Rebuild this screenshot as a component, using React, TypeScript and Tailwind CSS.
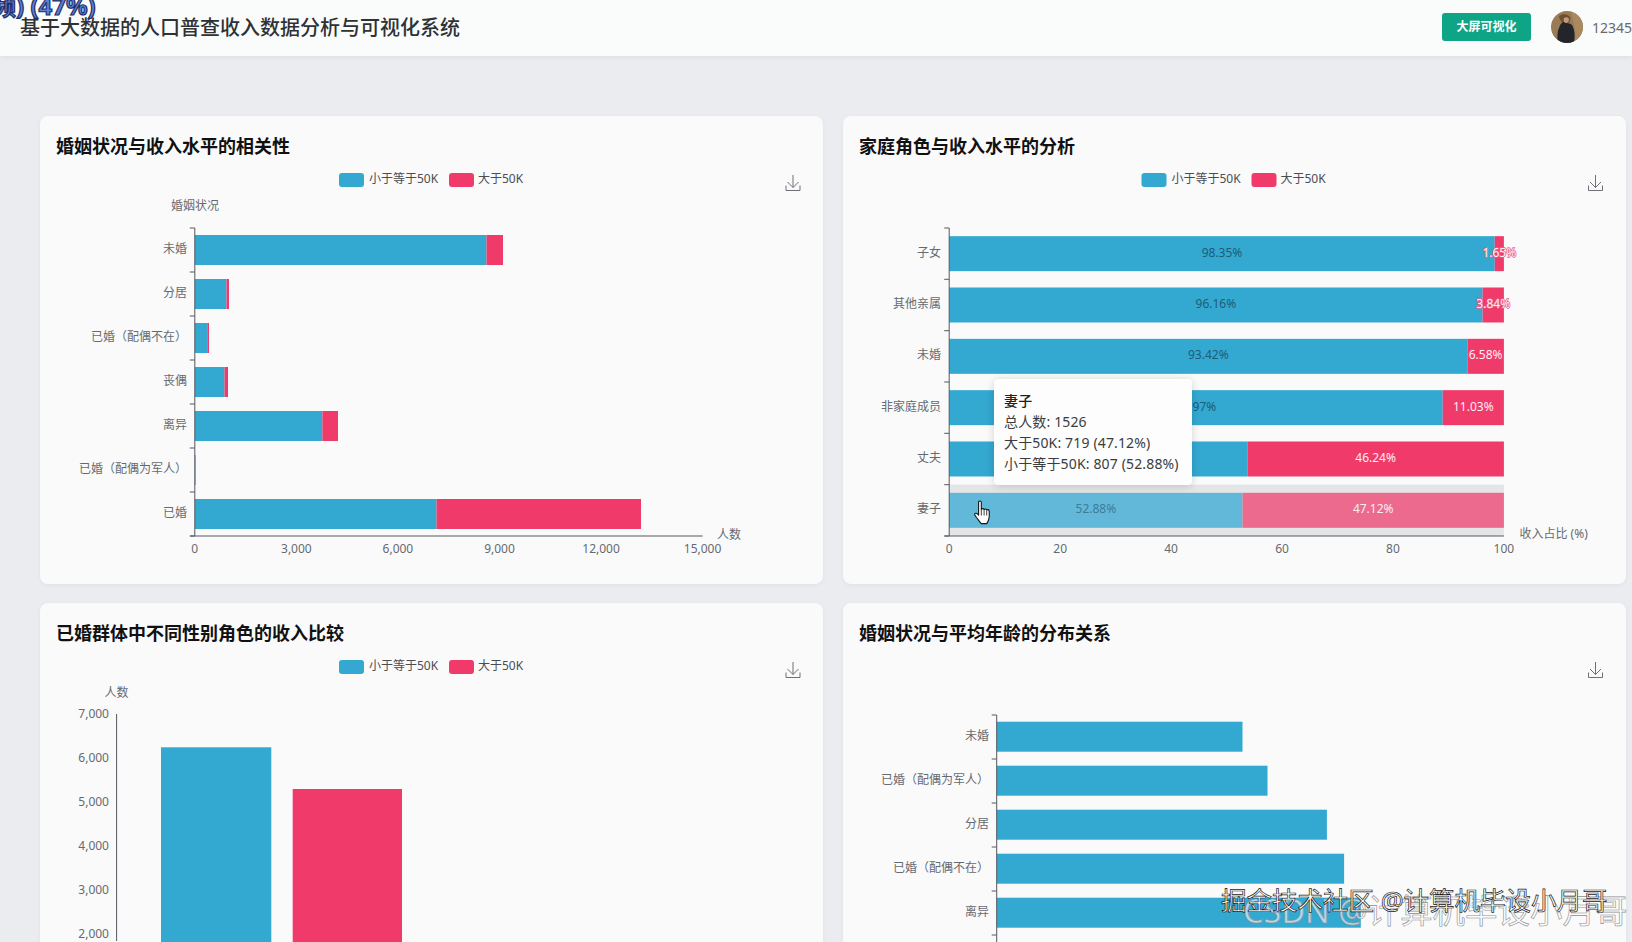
import type { ReactNode } from "react"

const BLUE = "#33a8d0"
const RED = "#f03a6a"
const AXIS = "#55585f"
const LABEL = "#666a70"

const LEFT_X = 40
const RIGHT_X = 843.5
const CARD_W = 783
const TOP_Y = 166
const BOTTOM_Y = 654
const CHART_H = 418

// numbers below are page pixels, the viewBox maps them onto each card
function Legend({ shift, y }: { shift: number; y: number }) {
  return (
    <g fontSize={12} fill="#4a4d52">
      <rect x={339 + shift} y={y} width={25} height={14} rx={3} fill={BLUE} />
      <text x={369 + shift} y={y + 10}>小于等于50K</text>
      <rect x={449 + shift} y={y} width={25} height={14} rx={3} fill={RED} />
      <text x={478 + shift} y={y + 10}>大于50K</text>
    </g>
  )
}

function SaveIcon({ shift, y }: { shift: number; y: number }) {
  const x = 786 + shift
  return (
    <path
      d={`M${x + 7} ${y}V${y + 12.5}M${x + 1.5} ${y + 7}L${x + 7} ${y + 12.5}L${x + 12.5} ${y + 7}M${x} ${y + 10.5}V${y + 15.5}H${x + 14}V${y + 10.5}`}
      fill="none"
      stroke="#6e7079"
      strokeWidth={1}
    />
  )
}

function Chart({ x, y, children }: { x: number; y: number; children: ReactNode }) {
  return (
    <svg viewBox={`${x} ${y} ${CARD_W} ${CHART_H}`} width={CARD_W} height={CHART_H} className="block">
      {children}
    </svg>
  )
}

function Card({ title, children, extra }: { title: string; children: ReactNode; extra?: ReactNode }) {
  return (
    <section className="relative h-[468px] rounded-lg bg-[#fafafa] shadow-[0_1px_4px_rgba(0,0,0,0.05)]">
      <h3 className="h-[50px] pl-4 pt-[18px] text-[18px] leading-[25px] font-bold text-[#111111]">{title}</h3>
      {children}
      {extra}
    </section>
  )
}

function YTicks({ x, ys }: { x: number; ys: number[] }) {
  return (
    <>
      <path d={`M${x} ${ys[0]}V${ys[ys.length - 1]}`} stroke={AXIS} strokeWidth={1} />
      {ys.map((y) => (
        <path key={y} d={`M${x - 5} ${y}H${x}`} stroke={AXIS} strokeWidth={1} />
      ))}
    </>
  )
}

const maritalCounts = [
  { name: "未婚", y: 250, blue: 486.5, red: 503 },
  { name: "分居", y: 294, blue: 226.5, red: 229 },
  { name: "已婚（配偶不在）", y: 338, blue: 207.3, red: 209 },
  { name: "丧偶", y: 382, blue: 224.5, red: 228 },
  { name: "离异", y: 426, blue: 322.4, red: 338 },
  { name: "已婚（配偶为军人）", y: 470, blue: 195.2, red: 195.6 },
  { name: "已婚", y: 514, blue: 436.5, red: 641 },
]

function MaritalChart() {
  const x0 = 194.8
  return (
    <Chart x={LEFT_X} y={TOP_Y}>
      <Legend shift={0} y={173} />
      <SaveIcon shift={0} y={175} />
      <text x={195} y={210} fontSize={12} fill={LABEL} textAnchor="middle">婚姻状况</text>
      {maritalCounts.map((row) => (
        <g key={row.name}>
          <rect x={x0} y={row.y - 15} width={row.blue - x0} height={30} fill={BLUE} />
          <rect x={row.blue} y={row.y - 15} width={row.red - row.blue} height={30} fill={RED} />
          <text x={187} y={row.y + 3} fontSize={12} fill={LABEL} textAnchor="end">{row.name}</text>
        </g>
      ))}
      <YTicks x={x0} ys={[228, 272, 316, 360, 404, 448, 492, 536]} />
      <path d={`M190 536H702.6`} stroke={AXIS} strokeWidth={1} />
      {["0", "3,000", "6,000", "9,000", "12,000", "15,000"].map((t, i) => (
        <text key={t} x={x0 + i * 101.56} y={553} fontSize={12} fill={LABEL} textAnchor="middle">{t}</text>
      ))}
      <text x={717} y={539} fontSize={12} fill={LABEL}>人数</text>
    </Chart>
  )
}

const roleShares = [
  { name: "子女", blue: 98.35, red: 1.65 },
  { name: "其他亲属", blue: 96.16, red: 3.84 },
  { name: "未婚", blue: 93.42, red: 6.58 },
  { name: "非家庭成员", blue: 88.97, red: 11.03 },
  { name: "丈夫", blue: 53.76, red: 46.24 },
  { name: "妻子", blue: 52.88, red: 47.12 },
]

function RoleChart() {
  const x0 = 949.7
  const w = 554.7
  const step = 51.33
  return (
    <Chart x={RIGHT_X} y={TOP_Y}>
      <Legend shift={803} y={173} />
      <SaveIcon shift={803} y={175} />
      <rect x={x0} y={484.6} width={w} height={51.4} fill="#e4e5e6" />
      {roleShares.map((row, i) => {
        const cy = 228 + step * i + step / 2
        const hovered = i === 5
        const split = x0 + (row.blue / 100) * w
        const thin = row.red < 5
        return (
          <g key={row.name} fontSize={12}>
            <rect x={x0} y={cy - 17.5} width={split - x0} height={35} fill={hovered ? "#62b8d8" : BLUE} />
            <rect x={split} y={cy - 17.5} width={x0 + w - split} height={35} fill={hovered ? "#ec6a8d" : RED} />
            <text x={(x0 + split) / 2} y={cy + 3} fill={hovered ? "#3f7c98" : "#1f5c78"} textAnchor="middle">
              {row.blue.toFixed(2)}%
            </text>
            <text
              x={(split + x0 + w) / 2}
              y={cy + 3}
              fill="#fdeef2"
              textAnchor="middle"
              stroke={thin ? "#ee5f86" : "none"}
              strokeWidth={thin ? 1.5 : 0}
              paintOrder="stroke"
            >
              {row.red.toFixed(2)}%
            </text>
            <text x={941.5} y={cy + 3} fill={LABEL} textAnchor="end">{row.name}</text>
          </g>
        )
      })}
      <YTicks x={x0} ys={[228, 279.3, 330.7, 382, 433.3, 484.7, 536]} />
      <path d={`M945 536H${x0 + w}`} stroke={AXIS} strokeWidth={1} />
      {[0, 20, 40, 60, 80, 100].map((t) => (
        <text key={t} x={x0 + (t / 100) * w} y={553} fontSize={12} fill={LABEL} textAnchor="middle">{t}</text>
      ))}
      <text x={1520} y={538} fontSize={12} fill={LABEL}>收入占比 (%)</text>
    </Chart>
  )
}

function RoleTooltip() {
  return (
    <div className="absolute left-[151px] top-[263px] h-[106px] w-[198px] rounded bg-[#fdfdfd] px-[10px] py-[11px] text-[14px] leading-[21px] tracking-[0.15px] text-[#3a3c40] shadow-[0_1px_8px_rgba(0,0,0,0.16)]">
      <p className="font-medium text-[#222222]">妻子</p>
      <p>总人数: 1526</p>
      <p>大于50K: 719 (47.12%)</p>
      <p className="whitespace-nowrap">小于等于50K: 807 (52.88%)</p>
    </div>
  )
}

function HandCursor() {
  return (
    <svg viewBox="0 0 18 25" className="absolute left-[131px] top-[384px] h-[25px] w-[18px]">
      <path
        d="M4.6 2.2c0-1.6 2.7-1.6 2.7 0v7.4c.4-1.4 2.7-1.3 2.8.2.4-1.2 2.5-1 2.6.4.5-1 2.3-.7 2.4.7.3 3 .3 6-.3 8.2-.5 2.1-1.3 3.5-2.1 4.5H7.3C5.8 22 4.2 19.6 2.5 17.5 1.5 16.2.4 14.9.7 13.9c.4-1 1.9-.9 2.8 0l1.1 1.2Z"
        fill="#ffffff"
        stroke="#151515"
        strokeWidth={1.1}
        strokeLinejoin="round"
      />
      <path d="M7.3 10v5.5M10.1 10.2v5.3M12.7 11v4.5" stroke="#151515" strokeWidth={0.8} fill="none" />
    </svg>
  )
}

function GenderChart() {
  const axisX = 116.6
  return (
    <Chart x={LEFT_X} y={BOTTOM_Y}>
      <Legend shift={0} y={661} />
      <SaveIcon shift={0} y={663} />
      <text x={116.5} y={698} fontSize={12} fill={LABEL} textAnchor="middle">人数</text>
      <path d={`M${axisX} 715V942`} stroke={AXIS} strokeWidth={1} />
      {["7,000", "6,000", "5,000", "4,000", "3,000", "2,000"].map((t, i) => (
        <text key={t} x={109} y={719 + i * 44} fontSize={12} fill={LABEL} textAnchor="end">{t}</text>
      ))}
      <rect x={161} y={748.3} width={110.3} height={200} fill={BLUE} />
      <rect x={292.7} y={790} width={109.3} height={160} fill={RED} />
    </Chart>
  )
}

const ageBars = [
  { name: "未婚", end: 1243 },
  { name: "已婚（配偶为军人）", end: 1268 },
  { name: "分居", end: 1327.4 },
  { name: "已婚（配偶不在）", end: 1344.6 },
  { name: "离异", end: 1361.3 },
]

function AgeChart() {
  const x0 = 997.2
  return (
    <Chart x={RIGHT_X} y={BOTTOM_Y}>
      <SaveIcon shift={803} y={663} />
      {ageBars.map((row, i) => (
        <g key={row.name}>
          <rect x={x0} y={722.7 + i * 44} width={row.end - x0} height={30} fill={BLUE} />
          <text x={989.5} y={741 + i * 44} fontSize={12} fill={LABEL} textAnchor="end">{row.name}</text>
        </g>
      ))}
      <YTicks x={x0} ys={[716, 760, 804, 848, 892, 936]} />
      <path d={`M${x0} 936V960`} stroke={AXIS} strokeWidth={1} />
    </Chart>
  )
}

function Avatar() {
  return (
    <svg viewBox="0 0 32 32" className="h-8 w-8 rounded-full">
      <rect width={32} height={32} fill="#9a7b55" />
      <path d="M20 0h12v32H24c1-8 0-14-1-18Z" fill="#a98a60" />
      <path d="M8 5c4-3 9-2 11 1 1 3-1 6-3 7l-4-1c-2-2-4-4-4-7Z" fill="#6f4f34" />
      <path d="M12 11c3 1 7 1 9 3 3 5 3 12 2 18H7c-1-5-1-11 1-15 1-3 2-5 4-6Z" fill="#24252a" />
      <path d="M13 7c2-1 4-1 5 1 0 2-1 4-3 4s-3-3-2-5Z" fill="#c09a7a" />
    </svg>
  )
}

export default function App() {
  return (
    <div className="relative h-screen overflow-hidden bg-[#eaecef] font-['Noto_Sans','Noto_Sans_CJK_SC',sans-serif]">
      <header className="relative z-10 flex h-14 items-center justify-between overflow-hidden bg-[#fafbfb] pl-5 shadow-[0_2px_5px_rgba(0,0,0,0.05)]">
        <h1 className="text-[20px] font-medium whitespace-nowrap text-[#2f3133]">基于大数据的人口普查收入数据分析与可视化系统</h1>
        <div className="mb-[3px] flex w-[190px] shrink-0 items-center">
          <button className="h-7 w-[93px] rounded-[3px] bg-[#0ea586] text-[12px] font-bold text-white">大屏可视化</button>
          <div className="ml-[20px] shrink-0"><Avatar /></div>
          <span className="mt-0.5 ml-[9px] text-[14px] text-[#666a70]">12345</span>
        </div>
      </header>

      <main className="grid grid-cols-2 gap-x-5 gap-y-[19px] pt-[60px] pr-[6px] pl-10">
        <Card title="婚姻状况与收入水平的相关性">
          <MaritalChart />
        </Card>
        <Card
          title="家庭角色与收入水平的分析"
          extra={
            <>
              <RoleTooltip />
              <HandCursor />
            </>
          }
        >
          <RoleChart />
        </Card>
        <Card title="已婚群体中不同性别角色的收入比较">
          <GenderChart />
        </Card>
        <Card title="婚姻状况与平均年龄的分布关系">
          <AgeChart />
        </Card>
      </main>

      {/* bits burned into the recording */}
      <span className="absolute -top-[8px] -left-[8px] z-20 text-[24px] leading-[28px] font-bold whitespace-nowrap text-[#5f82d2] [-webkit-text-stroke:1.2px_#232f6b]">
        频) (47%)
      </span>
      <span className="absolute top-[892px] left-[1243px] z-20 text-[32.5px] leading-[38px] whitespace-nowrap text-white/60 [-webkit-text-stroke:0.6px_#8a8f94]">
        CSDN @计算机毕设小月哥
      </span>
      <span className="absolute top-[883px] left-[1221px] z-20 text-[25.5px] leading-[34px] whitespace-nowrap text-white [-webkit-text-stroke:0.7px_#1a1a1a]">
        掘金技术社区 @计算机毕设小月哥
      </span>
    </div>
  )
}
